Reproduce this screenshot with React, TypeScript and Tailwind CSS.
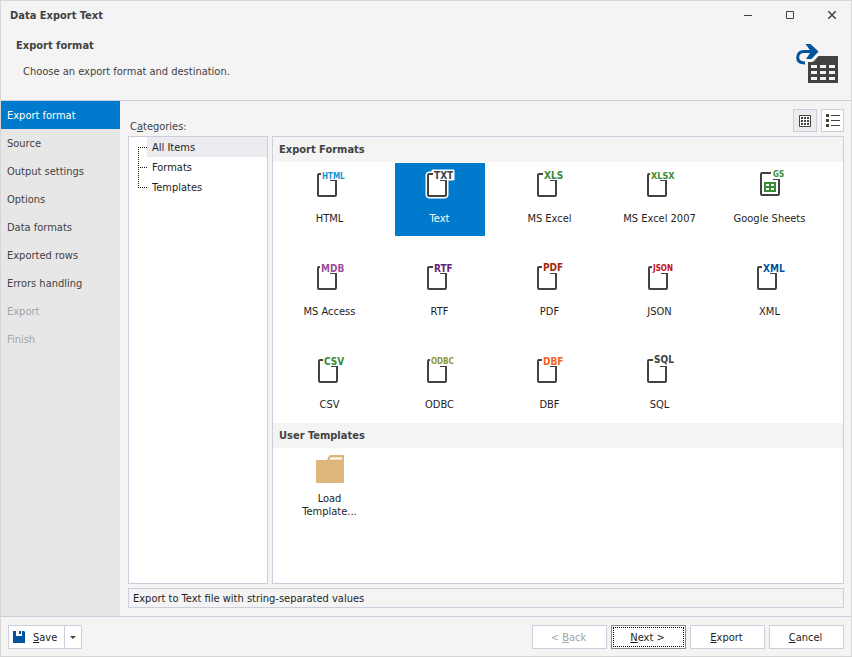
import React from 'react';
import clsx from 'clsx';

interface ExportFormat {
  id: string;
  label: string;
  tag: string;
  tagColor: string;
  tagSize: number;
  tagX: number;
  tagY?: number;
  shift?: number;
}

interface WizardStep {
  label: string;
  disabled?: boolean;
}

const steps: WizardStep[] = [
  { label: 'Export format' },
  { label: 'Source' },
  { label: 'Output settings' },
  { label: 'Options' },
  { label: 'Data formats' },
  { label: 'Exported rows' },
  { label: 'Errors handling' },
  { label: 'Export', disabled: true },
  { label: 'Finish', disabled: true },
];

const categories = ['All Items', 'Formats', 'Templates'];

const formats: ExportFormat[] = [
  { id: 'html', label: 'HTML', tag: 'HTML', tagColor: '#0f95d7', tagSize: 8, tagX: 9 },
  { id: 'txt', label: 'Text', tag: 'TXT', tagColor: '#424242', tagSize: 10, tagX: 11 },
  { id: 'xls', label: 'MS Excel', tag: 'XLS', tagColor: '#388a34', tagSize: 10, tagX: 11 },
  { id: 'xlsx', label: 'MS Excel 2007', tag: 'XLSX', tagColor: '#388a34', tagSize: 9, tagX: 8 },
  { id: 'gs', label: 'Google Sheets', tag: 'GS', tagColor: '#388a34', tagSize: 8, tagX: 20, tagY: 10 },
  { id: 'mdb', label: 'MS Access', tag: 'MDB', tagColor: '#9b4f96', tagSize: 10, tagX: 8 },
  { id: 'rtf', label: 'RTF', tag: 'RTF', tagColor: '#68217a', tagSize: 10, tagX: 11 },
  { id: 'pdf', label: 'PDF', tag: 'PDF', tagColor: '#a1260d', tagSize: 10, tagX: 10, tagY: 11 },
  { id: 'json', label: 'JSON', tag: 'JSON', tagColor: '#c50b17', tagSize: 8, tagX: 10, tagY: 11, shift: 1 },
  { id: 'xml', label: 'XML', tag: 'XML', tagColor: '#00539c', tagSize: 10, tagX: 10 },
  { id: 'csv', label: 'CSV', tag: 'CSV', tagColor: '#388a34', tagSize: 10, tagX: 11, shift: 1 },
  { id: 'odbc', label: 'ODBC', tag: 'ODBC', tagColor: '#879636', tagSize: 8, tagX: 8, tagY: 11 },
  { id: 'dbf', label: 'DBF', tag: 'DBF', tagColor: '#f6621e', tagSize: 10, tagX: 10 },
  { id: 'sql', label: 'SQL', tag: 'SQL', tagColor: '#424242', tagSize: 10, tagX: 11, tagY: 10 },
];

const FormatIcon: React.FC<{ format: ExportFormat; selected: boolean }> = ({ format, selected }) => {
  const isSheet = format.id === 'gs';
  const left = 5 + (format.shift ?? 0);

  return (
    <svg width="34" height="32" viewBox="0 0 34 32" className="overflow-visible" aria-hidden="true">
      {selected && (
        <path d="M9 5 H6 Q3 5 3 8 V28 Q3 31 6 31 H22 Q25 31 25 28 V13 H31 V3 H9 Z" fill="#fff" stroke="#fff" />
      )}
      {isSheet ? (
        <g fill="none" stroke="#424242" strokeWidth="2">
          <path d="M18 6 H9 Q8 6 8 7 V27 Q8 28 9 28 H25 Q26 28 26 27 V12" />
          <path d="M20 12.500 H27" strokeWidth="1" />
        </g>
      ) : (
        <g fill="none" stroke="#424242" strokeWidth="2">
          <path d={`M${format.tagX - 1} 7 H${left + 1} Q${left} 7 ${left} 8 V28 Q${left} 29 ${left + 1} 29 H${left + 17} Q${left + 18} 29 ${left + 18} 28 V13`} />
          <path d={`M${left + 12} 13.500 H${left + 19}`} strokeWidth="1" />
        </g>
      )}
      {isSheet && (
        <>
          <rect x="11" y="15" width="12" height="10" fill="#388a34" />
          <path d="M13 17h3v2h-3z M18 17h3v2h-3z M13 21h3v2h-3z M18 21h3v2h-3z" fill="#fff" />
        </>
      )}
      <text
        x={format.tagX}
        y={format.tagY ?? 12}
        fontFamily="'DejaVu Sans Condensed', 'DejaVu Sans', sans-serif"
        fontWeight="700"
        fontSize={format.tagSize}
        fill={format.tagColor}
      >
        {format.tag}
      </text>
    </svg>
  );
};

const FolderIcon = () => (
  <svg width="34" height="32" viewBox="0 0 34 32" aria-hidden="true">
    <path d="M3 8 Q3 7 4 7 H14 L16 3 Q16.500 2 17.500 2 H30 Q31 2 31 3 V29 Q31 30 30 30 H4 Q3 30 3 29 V8 Z" fill="#dcb67a" />
    <path d="M17.500 4.500 H29 V6.500 H16.500 Z" fill="#fff" />
  </svg>
);

const ExportTableIcon = () => (
  <svg width="42" height="40" viewBox="0 0 42 40" aria-hidden="true">
    <path d="M12 18 H15.500 Q17 18 18 17 L22.500 12 H42 V39 H12 Z" fill="#424242" />
    <path
      d="M15 21h6v3h-6z M24 21h6v3h-6z M33 21h6v3h-6z M15 27h6v3h-6z M24 27h6v3h-6z M33 27h6v3h-6z M15 33h6v3h-6z M24 33h6v3h-6z M33 33h6v3h-6z"
      fill="#f4f4f4"
    />
    <path d="M17 7.500 H8 C4 7.500 1.700 10 1.700 13.500 C1.700 17 4.500 19 9 19" fill="none" stroke="#00539c" strokeWidth="3" />
    <path d="M9.500 0 H14.500 L22.500 7.500 L15.500 15 H10 L15 7.500 Z" fill="#00539c" />
  </svg>
);

const GridViewIcon = () => (
  <svg width="12" height="12" viewBox="0 0 12 12" aria-hidden="true">
    <path d="M.5 .5 H11.500 V11.500 H.5 Z" fill="#fff" stroke="#424242" />
    <path
      d="M2 2h2v2h-2z M5 2h2v2h-2z M8 2h2v2h-2z M2 5h2v2h-2z M5 5h2v2h-2z M8 5h2v2h-2z M2 8h2v2h-2z M5 8h2v2h-2z M8 8h2v2h-2z"
      fill="#424242"
    />
  </svg>
);

const ListViewIcon = () => (
  <svg width="14" height="13" viewBox="0 0 14 13" aria-hidden="true">
    <path d="M0 0h3v3h-3z M0 5h3v3h-3z M0 10h3v3h-3z M5 1h9v1h-9z M5 6h9v1h-9z M5 11h9v1h-9z" fill="#424242" />
  </svg>
);

const SaveIcon = () => (
  <svg width="12" height="12" viewBox="0 0 12 12" aria-hidden="true">
    <path d="M0 0 H3 V5 H9 V0 H11 L12 1 V12 H0 Z" fill="#00539c" />
    <path d="M6 0h2v3h-2z" fill="#00539c" />
  </svg>
);

// Dotted connector drawn left of every category
const TreeLine: React.FC<{ first: boolean; last: boolean }> = ({ first, last }) => (
  <svg width="9" height="20" viewBox="0 0 9 20" className="shrink-0" aria-hidden="true">
    <path
      d={`M.5 ${first ? 10 : 0} V${last ? 11 : 20} M2 10.500 H9`}
      fill="none"
      stroke="#1e1e1e"
      strokeDasharray="1 1"
    />
  </svg>
);

const SectionHeader: React.FC<{ children: React.ReactNode }> = ({ children }) => (
  <h2 className="flex h-[25px] items-center bg-[#f4f4f4] px-1.5 pt-0.5 font-bold text-[#424242]">{children}</h2>
);

const Tile: React.FC<{
  label: string;
  compact?: boolean;
  selected?: boolean;
  onClick?: () => void;
  children: React.ReactNode;
}> = ({ label, compact = false, selected = false, onClick, children }) => (
  <button
    type="button"
    aria-pressed={selected}
    onClick={onClick}
    className={clsx(
      'flex min-h-[73px] w-[90px] flex-col items-center pt-1',
      selected ? 'bg-[#007acc] text-white' : 'text-[#1e1e1e]'
    )}
  >
    {children}
    <span className={clsx('pr-px leading-[13px]', compact ? 'mt-[7px] w-16' : 'mt-[13px]')}>{label}</span>
  </button>
);

const DialogButton: React.FC<{
  disabled?: boolean;
  focused?: boolean;
  children: React.ReactNode;
}> = ({ disabled, focused, children }) => (
  <button
    type="button"
    disabled={disabled}
    className={clsx(
      'h-6 w-[75px] border bg-white p-px',
      focused ? 'border-[#8a8a8a]' : 'border-[#cccedb]',
      disabled ? 'text-[#a2a4a5]' : 'text-[#1e1e1e]'
    )}
  >
    <span
      className={clsx(
        'flex h-full items-center justify-center border pt-0.5 pr-0.5',
        focused ? 'border-dotted border-black' : 'border-transparent'
      )}
    >
      <span>{children}</span>
    </span>
  </button>
);

const App: React.FC = () => {
  const [step, setStep] = React.useState('Export format');
  const [category, setCategory] = React.useState('All Items');
  const [selected, setSelected] = React.useState('txt');
  const [view, setView] = React.useState<'grid' | 'list'>('grid');

  return (
    <div className="flex min-h-screen flex-col border border-[#d6d6d6] bg-[#f4f4f4] font-['DejaVu_Sans_Condensed','DejaVu_Sans',sans-serif] text-[11px] text-[#424242]">
      <header className="flex h-[100px] flex-col border-b border-[#cccedb]">
        <div className="flex h-7 items-center justify-between pl-[9px]">
          <h1 className="pt-0.5 font-bold">Data Export Text</h1>
          <div className="flex items-center gap-1">
            <button type="button" aria-label="Minimize" className="flex h-7 w-[38px] items-center justify-center">
              <svg width="8" height="8" viewBox="0 0 8 8"><path d="M0 4h8v1H0z" fill="#424242" /></svg>
            </button>
            <button type="button" aria-label="Maximize" className="flex h-7 w-[38px] items-center justify-center">
              <svg width="8" height="8" viewBox="0 0 8 8"><path d="M.5 .5h7v7h-7z" fill="none" stroke="#424242" /></svg>
            </button>
            <button type="button" aria-label="Close" className="flex h-7 w-[38px] items-center justify-center">
              <svg width="8" height="8" viewBox="0 0 8 8"><path d="M0 0L8 8M8 0L0 8" stroke="#424242" strokeWidth="1.500" /></svg>
            </button>
          </div>
        </div>
        <div className="flex flex-1 items-start justify-between pl-[15px] pr-[13px]">
          <div className="pt-[9px]">
            <p className="leading-4 font-bold">Export format</p>
            <p className="mt-2.5 pl-[7px] leading-4">Choose an export format and destination.</p>
          </div>
          <div className="pt-[15px]">
            <ExportTableIcon />
          </div>
        </div>
      </header>

      <div className="flex flex-1">
        <nav className="w-[119px] shrink-0 bg-[#e7e7e7]">
          {steps.map((item) => (
            <button
              key={item.label}
              type="button"
              disabled={item.disabled}
              onClick={() => setStep(item.label)}
              className={clsx(
                'flex h-7 w-full items-center px-1.5 pt-0.5 text-left',
                item.label === step && 'bg-[#007acc] text-white',
                item.disabled && 'text-[#a2a4a5]'
              )}
            >
              {item.label}
            </button>
          ))}
        </nav>

        <main className="flex min-w-0 flex-1 flex-col pb-2 pl-2 pr-[7px]">
          <div className="flex h-[35px] items-end justify-between">
            <span id="categories-label" className="pb-px pl-0.5">
              C<u>a</u>tegories:
            </span>
            <div className="flex gap-1 pb-1">
              <button
                type="button"
                aria-label="Large icons"
                onClick={() => setView('grid')}
                className={clsx(
                  'flex h-[23px] w-6 items-center justify-center border border-[#cccedb]',
                  view === 'grid' ? 'bg-[#ececf0]' : 'bg-white'
                )}
              >
                <GridViewIcon />
              </button>
              <button
                type="button"
                aria-label="List"
                onClick={() => setView('list')}
                className={clsx(
                  'flex h-[23px] w-[23px] items-center justify-center border border-[#cccedb]',
                  view === 'list' ? 'bg-[#ececf0]' : 'bg-white'
                )}
              >
                <ListViewIcon />
              </button>
            </div>
          </div>

          <div className="flex flex-1 gap-1">
            <ul aria-labelledby="categories-label" className="w-[140px] shrink-0 border border-[#cccedb] bg-white pl-[9px]">
              {categories.map((name, index) => (
                <li key={name} className="flex h-5">
                  <TreeLine first={index === 0} last={index === categories.length - 1} />
                  <button
                    type="button"
                    onClick={() => setCategory(name)}
                    className={clsx(
                      'flex flex-1 items-center px-[5px] pt-0.5 text-left text-[#1e1e1e]',
                      name === category && 'bg-[#ececf0]'
                    )}
                  >
                    {name}
                  </button>
                </li>
              ))}
            </ul>

            <section className="min-w-0 flex-1 border border-[#cccedb] bg-white">
              <SectionHeader>Export Formats</SectionHeader>
              <div className="flex flex-wrap gap-5 pt-px pb-px pl-3">
                {formats.map((format) => (
                  <Tile
                    key={format.id}
                    label={format.label}
                    selected={format.id === selected}
                    onClick={() => setSelected(format.id)}
                  >
                    <FormatIcon format={format} selected={format.id === selected} />
                  </Tile>
                ))}
              </div>
              <SectionHeader>User Templates</SectionHeader>
              <div className="flex pt-px pl-3">
                <Tile label="Load Template..." compact>
                  <FolderIcon />
                </Tile>
              </div>
            </section>
          </div>

          <p className="mt-1 flex h-5 items-center border border-[#cccedb] px-1 pt-0.5 text-[#1e1e1e]">
            Export to Text file with string-separated values
          </p>
        </main>
      </div>

      <footer className="flex items-center justify-between border-t border-[#cccedb] px-[7px] pt-2 pb-[7px]">
        <div className="flex h-6 border border-[#cccedb] bg-white text-[#1e1e1e]">
          <button type="button" className="flex w-[55px] items-center gap-2 pl-1">
            <SaveIcon />
            <span className="pt-0.5"><u>S</u>ave</span>
          </button>
          <button type="button" aria-label="Save options" className="flex w-[17px] items-center justify-center border-l border-[#cccedb]">
            <svg width="6" height="3" viewBox="0 0 6 3"><path d="M0 0H6L3 3Z" fill="#424242" /></svg>
          </button>
        </div>
        <div className="flex gap-1">
          <DialogButton disabled>&lt; <u>B</u>ack</DialogButton>
          <DialogButton focused><u>N</u>ext &gt;</DialogButton>
          <DialogButton><u>E</u>xport</DialogButton>
          <DialogButton><u>C</u>ancel</DialogButton>
        </div>
      </footer>
    </div>
  );
};

export default App;
